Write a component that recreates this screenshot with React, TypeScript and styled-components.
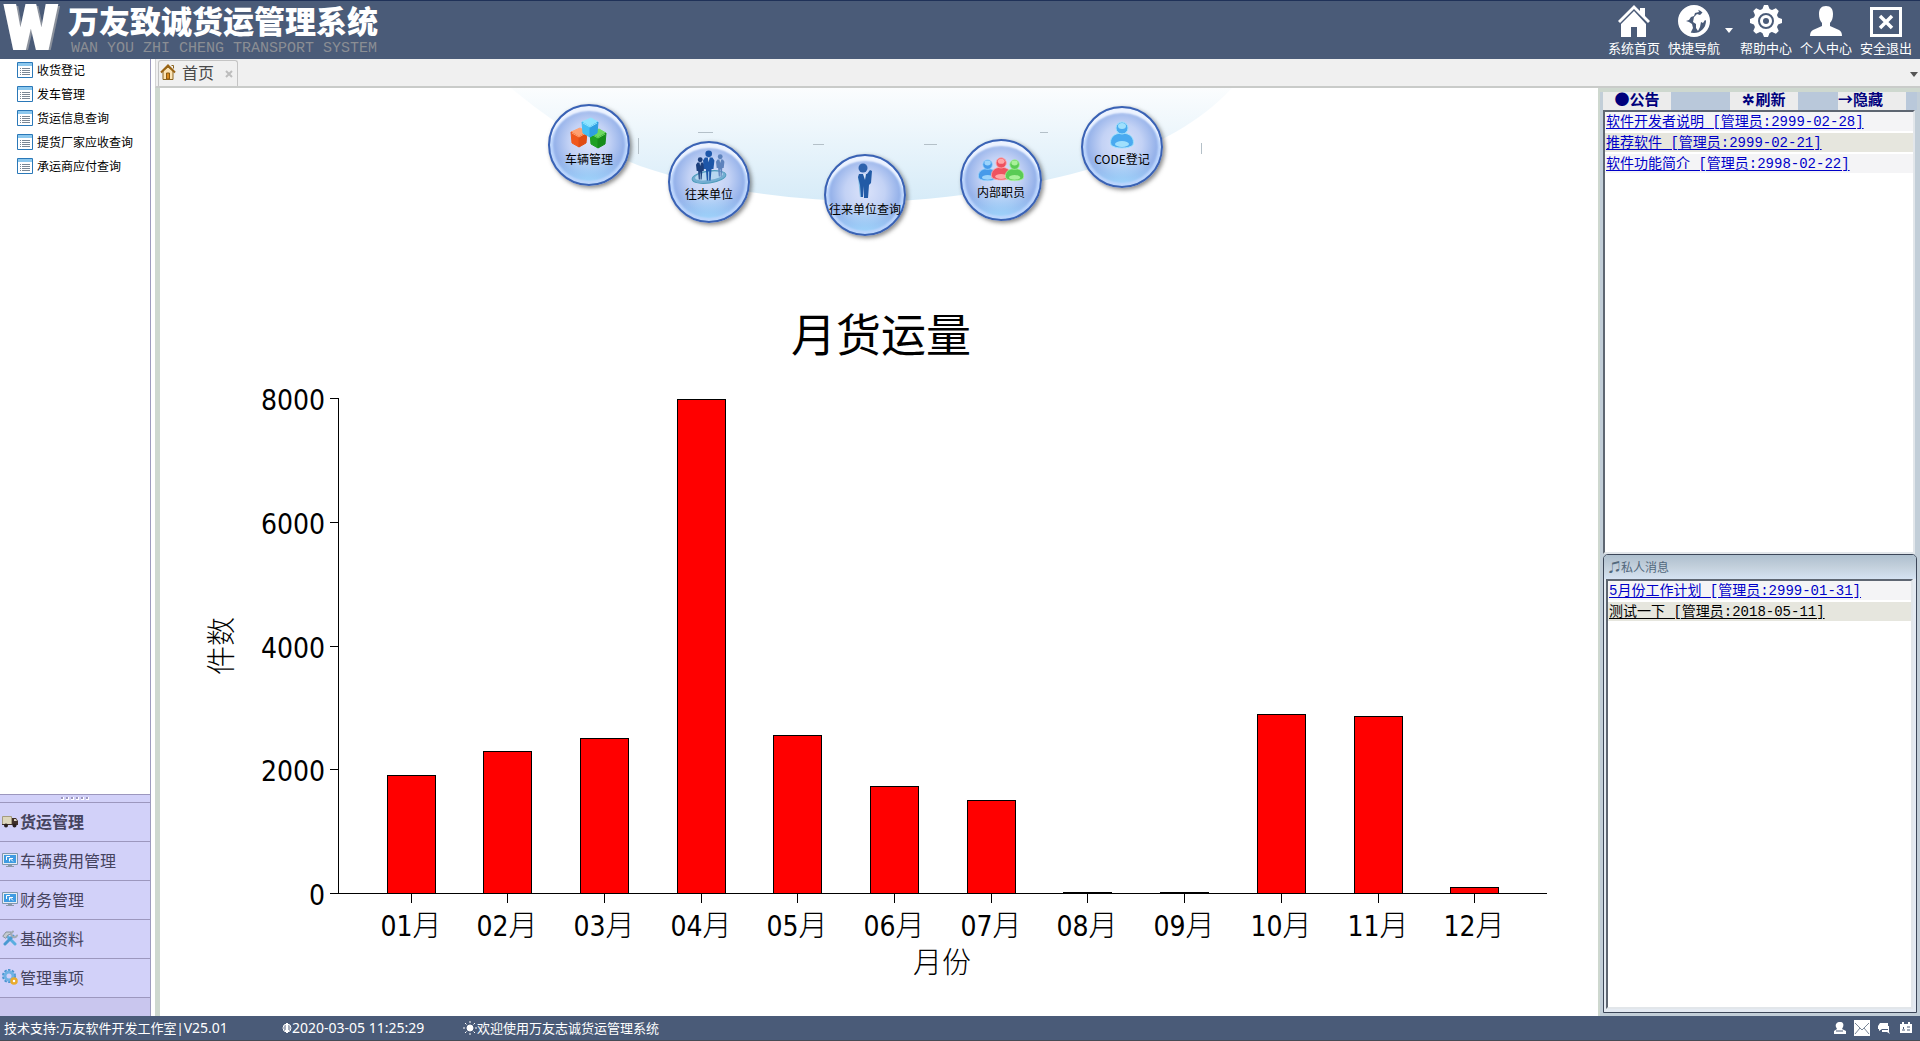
import React from "react";
import styled, { createGlobalStyle, css } from "styled-components";

const ui = `"Noto Sans", "Noto Sans CJK SC", sans-serif`;
const cjk = `"Noto Sans CJK SC", sans-serif`;
const mono = `"Liberation Mono", "Noto Sans CJK SC", monospace`;

const Global = createGlobalStyle`
  * { box-sizing: border-box; }
  body { margin: 0; font-family: ${cjk}; font-size: 12px; color: #000; }
  button { border: 0; padding: 0; background: none; font: inherit; color: inherit; cursor: pointer; }
  ul { list-style: none; margin: 0; padding: 0; }
  h1, h2, p { margin: 0; }
  svg { display: block; flex: none; }
`;

const Page = styled.div`
  display: flex;
  flex-direction: column;
  height: 100vh;
  background: #fff;
`;

/* ---------- header ---------- */
const Header = styled.header`
  display: flex;
  justify-content: space-between;
  height: 59px;
  flex: none;
  padding-right: 4px;
  color: #fff;
  background: #4a5b78;
  border-top: 1px solid #1f3158;
`;
const Brand = styled.div`
  display: flex;
  gap: 4px;
  padding-left: 4px;
`;
const BrandMark = styled.span`
  width: 60px;
  font: 900 62px/54px Roboto, sans-serif;
  -webkit-text-stroke: 2px #fff;
  text-shadow: 3px 1px 0 #8b919c;
`;
const BrandText = styled.div`
  display: flex;
  flex-direction: column;
`;
const BrandName = styled.h1`
  font: 900 31px/38px ${cjk};
`;
const BrandSub = styled.p`
  padding-left: 3px;
  font: 15px/19px "Liberation Mono", monospace;
  color: #8a8e94;
`;
const Tools = styled.nav`
  display: flex;
`;
const Tool = styled.button`
  display: flex;
  flex-direction: column;
  align-items: center;
  gap: 1px;
  width: 60px;
  padding-top: 4px;
  font-size: 13px;
  line-height: 19px;
`;
const Caret = styled.button`
  width: 12px;
  padding: 27px 0 0 1px;
  display: flex;
  align-items: flex-start;
`;

/* ---------- body ---------- */
const Body = styled.div`
  display: flex;
  flex: 1;
  min-height: 0;
`;
const Sidebar = styled.aside`
  display: flex;
  flex-direction: column;
  justify-content: space-between;
  width: 151px;
  flex: none;
  border-right: 1px solid #9c9abd;
`;
const MenuItem = styled.button`
  display: flex;
  align-items: center;
  gap: 4px;
  height: 24px;
  padding: 0 0 3px 17px;
  font-size: 12px;
`;
const Groups = styled.div`
  display: flex;
  flex-direction: column;
  height: 222px;
  background: #c9c6ee;
  border-top: 1px solid #9c97be;
`;
const Grip = styled.div`
  display: flex;
  justify-content: center;
  gap: 2px;
  height: 8px;
  padding-top: 2px;
  background: #d2d1f9;
  border-bottom: 1px solid #9c97be;
`;
const Dot = styled.i`
  width: 3px;
  height: 3px;
  background: #9c97be;
  border: solid #fff;
  border-width: 0 1px 1px 0;
`;
const Group = styled.button<{ $active?: boolean }>`
  display: flex;
  align-items: center;
  gap: 2px;
  height: 39px;
  padding: 0 0 3px 2px;
  font-size: 16px;
  font-weight: ${(p) => (p.$active ? 700 : 400)};
  color: #45435e;
  background: #d2d1f9;
  border-bottom: 1px solid #9c97be;
`;
const Work = styled.div`
  display: flex;
  flex-direction: column;
  flex: 1;
  min-width: 0;
  padding-left: 4px;
`;
const TabBar = styled.div`
  display: flex;
  align-items: flex-end;
  justify-content: space-between;
  height: 29px;
  flex: none;
  padding: 0 2px 0 2px;
  background: #f0f0f0;
  border-left: 1px solid #d4d4d4;
  border-bottom: 2px solid #c9cbc9;
`;
const Tab = styled.div`
  display: flex;
  align-items: center;
  width: 80px;
  height: 26px;
  padding: 0 4px 0 1px;
  color: #4a4a4a;
  border: 1px solid #c4c4c4;
  border-bottom: 0;
  border-radius: 3px 3px 0 0;
`;
const TabName = styled.button`
  display: flex;
  flex: 1;
  align-items: center;
  gap: 6px;
  padding-bottom: 3px;
  font-size: 16px;
  line-height: 22px;
`;
const TabMenu = styled.button`
  height: 24px;
`;
const Panes = styled.div`
  display: flex;
  flex: 1;
  min-height: 0;
`;
const Main = styled.main`
  display: flex;
  flex-direction: column;
  flex: 1;
  min-width: 0;
  border-left: 5px solid #ced8cf;
  background: #fff;
`;

/* ---------- launcher ---------- */
const Launcher = styled.section`
  position: relative;
  width: 740px;
  height: 152px;
  flex: none;
  margin: 0 auto;
`;
const Orb = styled.button<{ $x: number; $y: number; $raised?: boolean }>`
  position: absolute;
  left: ${(p) => p.$x - 41}px;
  top: ${(p) => p.$y - 41}px;
  display: flex;
  flex-direction: column;
  align-items: center;
  justify-content: flex-end;
  gap: 1px;
  width: 82px;
  height: 82px;
  padding-bottom: ${(p) => (p.$raised ? 18 : 16)}px;
  border: 2px solid #3a62b4;
  border-radius: 50%;
  background:
    radial-gradient(ellipse 56px 40px at 50% 104%, rgba(160, 220, 255, 0.9), rgba(130, 190, 250, 0) 85%),
    radial-gradient(circle at 50% 46%, #dbe3fa 0, #c3d2f5 20px, #97b3ea 34px, #86adf0 100%);
  box-shadow: inset 0 6px 2px -1px #edf3ff, inset 0 0 2px 3px #bcd5fc, 2px 2px 4px rgba(60, 60, 60, 0.6);
  font-size: 12px;
  line-height: 18px;
  white-space: nowrap;
`;
const ChartBox = styled.section`
  flex: 1;
  min-height: 0;
  svg { width: 100%; height: 100%; }
  text { font-family: "DejaVu Sans Condensed", "DejaVu Sans", "Noto Sans CJK SC", sans-serif; font-size: 28px; }
  .name { font-family: ${cjk}; font-weight: 300; font-size: 29px; }
  .title { font-family: ${cjk}; font-size: 45px; }
`;

/* ---------- notices ---------- */
const Side = styled.aside`
  display: flex;
  flex-direction: column;
  width: 322px;
  flex: none;
  padding: 0 3px 3px;
  background: #c2ced8;
  border-left: 2px solid #ced8cf;
  border-top: 4px solid #ced8cf;
`;
const SideBar = styled.div`
  display: flex;
  height: 18px;
  flex: none;
  background: #b9c8da;
  button + button { margin-left: 40px; }
  button:nth-child(2) { margin-left: 59px; }
`;
const SideButton = styled.button<{ $start?: boolean }>`
  width: 68px;
  padding-bottom: 4px;
  font: 700 15px/14px ${cjk};
  text-align: ${(p) => (p.$start ? "left" : "center")};
  white-space: nowrap;
  color: #00007c;
  background: #ececec;
`;
const inset = css`
  background: #fff;
  border: 2px solid #5e6672;
  border-right-color: #e2e6ea;
  border-bottom-color: #e2e6ea;
`;
const Notices = styled.ul`
  ${inset}
  height: 444px;
  flex: none;
  margin-right: 2px;
`;
const Notice = styled.li`
  height: 21px;
  padding: 0 1px;
  font: 14px/21px ${mono};
  background: #f4f4f6;
  border-bottom: 2px solid #fff;
  &:nth-child(even) { background: #e6e6de; }
`;
const NoticeLink = styled.a<{ $read?: boolean }>`
  color: ${(p) => (p.$read ? "#000" : "#0000c8")};
  text-decoration: underline;
  text-underline-offset: 2px;
`;
const Private = styled.section`
  display: flex;
  flex-direction: column;
  flex: 1;
  min-height: 0;
  padding: 0 3px 3px 2px;
  background: #e4eaf2;
  border: 1px solid #3c4658;
  border-radius: 5px 5px 0 0;
`;
const PrivateTitle = styled.h2`
  height: 24px;
  flex: none;
  margin: 0 -3px 0 -2px;
  padding-left: 5px;
  font: 400 12px/23px ${cjk};
  color: #52687c;
  border-radius: 4px 4px 0 0;
  background: linear-gradient(#aebfce, #c3d0dc 50%, #d5e2f2);
`;
const Messages = styled.ul`
  ${inset}
  flex: 1;
`;

/* ---------- footer ---------- */
const Footer = styled.footer`
  display: flex;
  align-items: center;
  height: 25px;
  flex: none;
  padding: 0 6px 0 4px;
  font: 13px/24px ${ui};
  color: #fff;
  background: #4a5b78;
  border-bottom: 1px solid #454b55;
`;
const Latin = styled.span`
  font-size: 14px;
`;
const Cell = styled.span<{ $w?: number }>`
  display: flex;
  align-items: center;
  white-space: nowrap;
  ${(p) => (p.$w ? `width: ${p.$w}px;` : "flex: 1;")}
`;
const Tray = styled.div`
  display: flex;
  align-items: center;
  gap: 6px;
`;
const TrayButton = styled.button`
  display: flex;
  justify-content: center;
  width: 16px;
`;

/* ---------- drawings ---------- */
const HomeIcon = () => (
  <svg width="32" height="32" viewBox="0 0 32 32" fill="#fff">
    <path d="M16 0 0 16l2 2L16 4l14 14 2-2-5-5V3h-5v3z" />
    <path d="M16 6 3 19v13h10V22h6v10h9V19z" />
  </svg>
);
const GlobeIcon = () => (
  <svg width="32" height="32" viewBox="0 0 32 32">
    <circle cx="16" cy="16" r="14" fill="#4a5b78" stroke="#fff" strokeWidth="4" />
    <path d="M3 10 8 4l7-2 5 2 1 3-4 1-1 3-3 1-2 3-3 1 3 1 3 2 1 4-2 4-1 3-3-1-4-6-4-5z" fill="#fff" />
    <path d="M16 12l3-3 3 1 3-3 5 6v4l-3-2-2 3-2-1-1 5-2 4-2-3v-4l-3-2z" fill="#fff" />
  </svg>
);
const GearIcon = () => (
  <svg width="32" height="32" viewBox="0 0 32 32">
    <g fill="#fff">
      <circle cx="16" cy="16" r="12.5" />
      {[0, 45, 90, 135, 180, 225, 270, 315].map((a) => (
        <path key={a} d="M12 5 14 0h4l2 5z" transform={`rotate(${a} 16 16)`} />
      ))}
    </g>
    <circle cx="16" cy="16" r="7" fill="none" stroke="#4a5b78" strokeWidth="2" />
    <circle cx="16" cy="16" r="3" fill="#4a5b78" />
  </svg>
);
const UserIcon = () => (
  <svg width="32" height="32" viewBox="0 0 32 32" fill="#fff">
    <path d="M16 1c5 0 7 3 7 8 0 4-1 7-3 9v3l9 4c2 1 3 3 3 6H0c0-3 1-5 3-6l9-4v-3c-2-2-3-5-3-9 0-5 2-8 7-8z" />
  </svg>
);
const ExitIcon = () => (
  <svg width="32" height="32" viewBox="0 0 32 32" fill="none" stroke="#fff">
    <path d="M1.500 3.500h29v27h-29z" strokeWidth="3" />
    <path d="m10 11 12 12m0-12L10 23" strokeWidth="3.500" />
  </svg>
);
const Triangle = ({ color }: { color: string }) => (
  <svg width="8" height="5" viewBox="0 0 8 5"><path d="M0 0h8L4 5z" fill={color} /></svg>
);
const ListIcon = () => (
  <svg width="16" height="16" viewBox="0 0 16 16">
    <path d="M.5.5h15v15H.5z" fill="#fff" stroke="#2a78b8" />
    <path d="M1 1h14v3H1z" fill="#8cc8ee" />
    <path d="M3 6.500h1m1 0h8M3 8.500h1m1 0h8M3 10.500h1m1 0h8M3 12.500h1m1 0h8" stroke="#7a8794" />
  </svg>
);
const TabHome = () => (
  <svg width="16" height="16" viewBox="0 0 16 16">
    <path d="M3 7v8.500h10V7L8 3z" fill="#fbe3b4" stroke="#8a6420" />
    <path d="M6.500 9h3v6h-3z" fill="#d98a1c" stroke="#8a5a10" />
    <path d="M1 8.500 8 1.500l7 7" fill="none" stroke="#9a6414" strokeWidth="2" />
    <path d="M11.500 1.500h2v3" fill="none" stroke="#8a6420" />
  </svg>
);
const TruckIcon = () => (
  <svg width="16" height="16" viewBox="0 0 16 16">
    <path d="M.5 3.500h9v8h-9z" fill="#ddd6bd" stroke="#a59c80" />
    <path d="M10 5h4l2 3v4h-6z" fill="#40302a" />
    <path d="M12 6h2l1 2h-3z" fill="#d8d0c0" />
    <path d="M0 11h16v1H0z" fill="#40302a" />
    <circle cx="4" cy="12.500" r="2" fill="#2a2020" /><circle cx="12.500" cy="12.500" r="2" fill="#2a2020" />
  </svg>
);
const ScreenIcon = () => (
  <svg width="16" height="16" viewBox="0 0 16 16">
    <path d="M.5 1.500h15v11H.5z" fill="#e5edf4" stroke="#7f97ae" />
    <path d="M2 3h12v8H2z" fill="#3f9be2" />
    <path d="M4.500 8V4.500H8M7.500 9.500v-3H11m-3 0 3 3" fill="none" stroke="#fff" />
    <path d="M6 13h4v1h2v1H4v-1h2z" fill="#8b99a8" />
  </svg>
);
const ToolsIcon = () => (
  <svg width="16" height="16" viewBox="0 0 16 16" fill="none" strokeLinecap="round">
    <path d="M5 6 13 14" stroke="#5aaee0" strokeWidth="3" />
    <path d="M3 14 11 6" stroke="#4a9ad2" strokeWidth="3" />
    <path d="M1 6 4 2h5v2L6 5 4 8z" fill="#c3cad0" stroke="#88939c" />
    <path d="M11 1.500a3 3 0 1 0 4 4" stroke="#a2abb3" strokeWidth="2" />
  </svg>
);
const CogsIcon = () => (
  <svg width="16" height="16" viewBox="0 0 16 16" fill="none">
    <circle cx="7" cy="7" r="6" stroke="#4a94d0" strokeWidth="2" strokeDasharray="2.400 1.400" />
    <circle cx="7" cy="7" r="4" stroke="#6fb2e4" strokeWidth="3" />
    <circle cx="12" cy="12" r="2.500" fill="#fff" stroke="#e9ab2e" strokeWidth="2.500" />
  </svg>
);

const Cube = ({ x, y, a, b, c }: { x: number; y: number; a: string; b: string; c: string }) => (
  <g transform={`translate(${x} ${y})`} strokeLinejoin="round">
    <path d="m0 4 9-4 7 4-8 5z" fill={a} stroke={a} /><path d="m0 4 8 5v10l-7-4z" fill={b} stroke={b} /><path d="m16 4-8 5v10l7-4z" fill={c} stroke={c} />
    <path d="m1 5 7 4 7-4" fill="none" stroke={a} />
  </g>
);
const Cubes = () => (
  <svg width="38" height="32" viewBox="0 0 38 32">
    <Cube x={1} y={11} a="#ffa070" b="#f0581c" c="#e04c14" />
    <Cube x={20} y={12} a="#6cd860" b="#1fa023" c="#168c1a" />
    <Cube x={12} y={1} a="#90e4ff" b="#45bff4" c="#2f9fe2" />
  </svg>
);
const Suit = ({ x, y, s, c }: { x: number; y: number; s: number; c: string }) => (
  <g transform={`translate(${x} ${y}) scale(${s})`} fill={c}>
    <circle cx="6" cy="4" r="3.500" />
    <path d="M2 8h8l2 3-1 9H9l-1 12H6.500V22h-1v10H4L3 20H1L0 11z" />
    <path d="m5 8 1 5 1-5z" fill="#dce8fa" />
  </g>
);
const Team = () => (
  <svg width="36" height="34" viewBox="0 0 36 34">
    <ellipse cx="18" cy="27" rx="17" ry="6" fill="#74aed2" stroke="#4e9cbc" transform="rotate(-8 18 27)" />
    <ellipse cx="18" cy="26" rx="14" ry="4" fill="#b7d7f0" transform="rotate(-8 18 26)" />
    <Suit x={5} y={7} s={0.7} c="#1c3f7c" /><Suit x={25} y={4} s={0.7} c="#5d82bc" /><Suit x={12} y={0} s={0.95} c="#1d56a8" />
  </svg>
);
const Person = () => (
  <svg width="20" height="36" viewBox="0 0 20 36">
    <path d="M3 14h5v20H5z" fill="#83bde4" />
    <circle cx="8" cy="5" r="4.500" fill="#2e62ac" />
    <path d="M4 11h8l3-4 2 1-1 12-2 2-1 13H9V23l-1 11H6L5 22 3 14z" fill="#225ba6" />
    <path d="m8 11 2 6 1-6z" fill="#dce8fa" />
  </svg>
);
const Bust = ({ x, y, s, c, l }: { x: number; y: number; s: number; c: string; l: string }) => (
  <g transform={`translate(${x} ${y}) scale(${s})`}>
    <path d="M1 24c-2-7 3-12 11-12s13 5 11 12c-4 4-18 4-22 0z" fill={c} stroke={l} />
    <circle cx="12" cy="7" r="6" fill={c} stroke={l} />
    <ellipse cx="12" cy="5" rx="4" ry="3" fill={l} /><ellipse cx="12" cy="23" rx="7" ry="3" fill={l} />
  </g>
);
const Staff = () => (
  <svg width="46" height="26" viewBox="0 0 46 26">
    <Bust x={0} y={3} s={0.8} c="#469bea" l="#9bd4fb" /><Bust x={13} y={1} s={0.85} c="#ee5260" l="#ffa7a8" /><Bust x={27} y={3} s={0.8} c="#5acb55" l="#a9f19a" />
  </svg>
);
const Member = () => (
  <svg width="26" height="28" viewBox="0 0 26 28"><Bust x={1} y={0} s={1} c="#4aaaf0" l="#9fe0fc" /></svg>
);
const Arc = () => (
  <svg width="740" height="152" viewBox="509 88 740 152">
    <defs>
      <linearGradient id="sky" x1="0" y1="0" x2="0" y2="1">
        <stop offset="0" stopColor="#fbfdfe" /><stop offset="1" stopColor="#d6ebf8" />
      </linearGradient>
    </defs>
    <path d="M511 88C552 122 590 147 640 166 710 190 790 200 870 202 960 200 1040 184 1100 166 1160 144 1200 122 1232 88z" fill="url(#sky)" />
    <path d="M638.500 138v16M698 132.500h15M813 144.500h11M924 144.500h13M1040 132.500h8M1201.500 143v11" stroke="#b4c0c8" />
  </svg>
);

/* ---------- data ---------- */
const tools = [
  { label: "系统首页", Icon: HomeIcon },
  { label: "快捷导航", Icon: GlobeIcon, caret: true },
  { label: "帮助中心", Icon: GearIcon },
  { label: "个人中心", Icon: UserIcon },
  { label: "安全退出", Icon: ExitIcon },
];
const menu = ["收货登记", "发车管理", "货运信息查询", "提货厂家应收查询", "承运商应付查询"];
const groups = [
  { label: "货运管理", Icon: TruckIcon },
  { label: "车辆费用管理", Icon: ScreenIcon },
  { label: "财务管理", Icon: ScreenIcon },
  { label: "基础资料", Icon: ToolsIcon },
  { label: "管理事项", Icon: CogsIcon },
];
const orbs = [
  { label: "车辆管理", Icon: Cubes, x: 80, y: 57 },
  { label: "往来单位", Icon: Team, x: 200, y: 94, raised: true },
  { label: "往来单位查询", Icon: Person, x: 356, y: 107 },
  { label: "内部职员", Icon: Staff, x: 492, y: 92, raised: true },
  { label: "CODE登记", Icon: Member, x: 613, y: 59, raised: true },
];
const volumes = [1907, 2295, 2505, 7984, 2553, 1729, 1503, 18, 18, 2893, 2860, 97];
const notices = ["软件开发者说明 [管理员:2999-02-28]", "推荐软件 [管理员:2999-02-21]", "软件功能简介 [管理员:2998-02-22]"];

const Chart = () => {
  const base = 893.5;
  const toY = (v: number) => Math.round(base - (v * 495) / 8000 - 0.5) + 0.5;
  return (
    <svg viewBox="160 240 1438 776" role="img" aria-label="月货运量">
      <text className="title" x="881" y="352" textAnchor="middle">月货运量</text>
      <path d="M338.500 398v496M330 893.500h1217" stroke="#000" fill="none" />
      {[0, 2000, 4000, 6000, 8000].map((v) => (
        <g key={v}>
          <path d={`M330 ${toY(v)}h9`} stroke="#000" />
          <text x="325" y={toY(v) + 11} textAnchor="end">{v}</text>
        </g>
      ))}
      {volumes.map((v, i) => {
        const x = Math.floor(387.3 + i * 96.67) + 0.5;
        const y = toY(v);
        return (
          <g key={i}>
            <rect x={x} y={y} width="48" height={base - y} fill="#f00" stroke="#000" />
            <path d={`M${x + 24} 894v9`} stroke="#000" />
            <text x={x - 7} y="936">{String(i + 1).padStart(2, "0")}<tspan className="name">月</tspan></text>
          </g>
        );
      })}
      <text className="name" x="942" y="973" textAnchor="middle">月份</text>
      <text className="name" transform="translate(232 646) rotate(-90)" textAnchor="middle">件数</text>
    </svg>
  );
};

export default function App() {
  return (
    <Page>
      <Global />
      <Header>
        <Brand>
          <BrandMark>W</BrandMark>
          <BrandText>
            <BrandName>万友致诚货运管理系统</BrandName>
            <BrandSub>WAN YOU ZHI CHENG TRANSPORT SYSTEM</BrandSub>
          </BrandText>
        </Brand>
        <Tools>
          {tools.map(({ label, Icon, caret }) => (
            <React.Fragment key={label}>
              <Tool><Icon />{label}</Tool>
              {caret && <Caret aria-label="展开"><Triangle color="#fff" /></Caret>}
            </React.Fragment>
          ))}
        </Tools>
      </Header>
      <Body>
        <Sidebar>
          <ul>
            {menu.map((m) => (
              <li key={m}><MenuItem><ListIcon />{m}</MenuItem></li>
            ))}
          </ul>
          <Groups>
            <Grip>{[0, 1, 2, 3, 4, 5].map((d) => <Dot key={d} />)}</Grip>
            {groups.map(({ label, Icon }, i) => (
              <Group key={label} $active={i === 0}><Icon />{label}</Group>
            ))}
          </Groups>
        </Sidebar>
        <Work>
          <TabBar>
            <Tab>
              <TabName><TabHome />首页</TabName>
              <button aria-label="关闭">
                <svg width="8" height="8" viewBox="0 0 8 8"><path d="m1 1 6 6m0-6L1 7" stroke="#bdbdbd" strokeWidth="2" /></svg>
              </button>
            </Tab>
            <TabMenu aria-label="标签列表"><Triangle color="#555" /></TabMenu>
          </TabBar>
          <Panes>
            <Main>
              <Launcher>
                <Arc />
                {orbs.map(({ label, Icon, x, y, raised }) => (
                  <Orb key={label} $x={x} $y={y} $raised={raised}><Icon />{label}</Orb>
                ))}
              </Launcher>
              <ChartBox><Chart /></ChartBox>
            </Main>
            <Side>
              <SideBar>
                <SideButton>●公告</SideButton>
                <SideButton>✲刷新</SideButton>
                <SideButton $start>→隐藏</SideButton>
              </SideBar>
              <Notices>
                {notices.map((n) => (
                  <Notice key={n}><NoticeLink href="#">{n}</NoticeLink></Notice>
                ))}
              </Notices>
              <Private>
                <PrivateTitle>♫私人消息</PrivateTitle>
                <Messages>
                  <Notice><NoticeLink href="#">5月份工作计划 [管理员:2999-01-31]</NoticeLink></Notice>
                  <Notice><NoticeLink href="#" $read>测试一下 [管理员:2018-05-11]</NoticeLink></Notice>
                </Messages>
              </Private>
            </Side>
          </Panes>
        </Work>
      </Body>
      <Footer>
        <Cell $w={278}>技术支持:万友软件开发工作室|<Latin>V25.01</Latin></Cell>
        <Cell $w={181}>
          <svg width="10" height="12" viewBox="0 0 10 12" fill="none" stroke="#fff">
            <circle cx="5" cy="6" r="4" /><path d="M5 1v10" strokeWidth="2" /><path d="M3 3v5l2 2 2-2V3" />
          </svg>
          <Latin>2020-03-05 11:25:29</Latin>
        </Cell>
        <Cell>
          <svg width="14" height="14" viewBox="0 0 14 14" stroke="#fff">
            <circle cx="7" cy="7" r="3" fill="#fff" />
            <path d="M7 0v2m0 10v2M0 7h2m10 0h2M2 2l1.500 1.500m7 7L12 12m0-10-1.500 1.500m-7 7L2 12" />
          </svg>
          欢迎使用万友志诚货运管理系统
        </Cell>
        <Tray>
          <TrayButton aria-label="用户">
            <svg width="12" height="12" viewBox="0 0 12 12" fill="#fff"><path d="M6 0c3 0 4 2 3 5L8 7l4 2v3H0V9l3-2-1-2C1 2 3 0 6 0z" /><path d="M2 9h7" stroke="#4a5b78" /></svg>
          </TrayButton>
          <TrayButton aria-label="邮件">
            <svg width="16" height="16" viewBox="0 0 16 16"><path d="M0 0h16v16H0z" fill="#fff" /><path d="m1 3 7 7 7-7M1 14l5-6m9 6-5-6" fill="none" stroke="#7a8798" /></svg>
          </TrayButton>
          <TrayButton aria-label="消息">
            <svg width="12" height="12" viewBox="0 0 12 12" fill="#fff"><path d="M2 1h8v6H4L1 9V7H0V4z" /><path d="M10 4h1v6l1 2-3-2H4V8h6z" /></svg>
          </TrayButton>
          <TrayButton aria-label="名片">
            <svg width="12" height="12" viewBox="0 0 12 12"><path d="M0 2h2V0h2v2h4V0h2v2h2v9H0z" fill="#fff" /><path d="M2 8h3M3.500 5v2M7 5h3M7 8h3" stroke="#4a5b78" /></svg>
          </TrayButton>
        </Tray>
      </Footer>
    </Page>
  );
}
